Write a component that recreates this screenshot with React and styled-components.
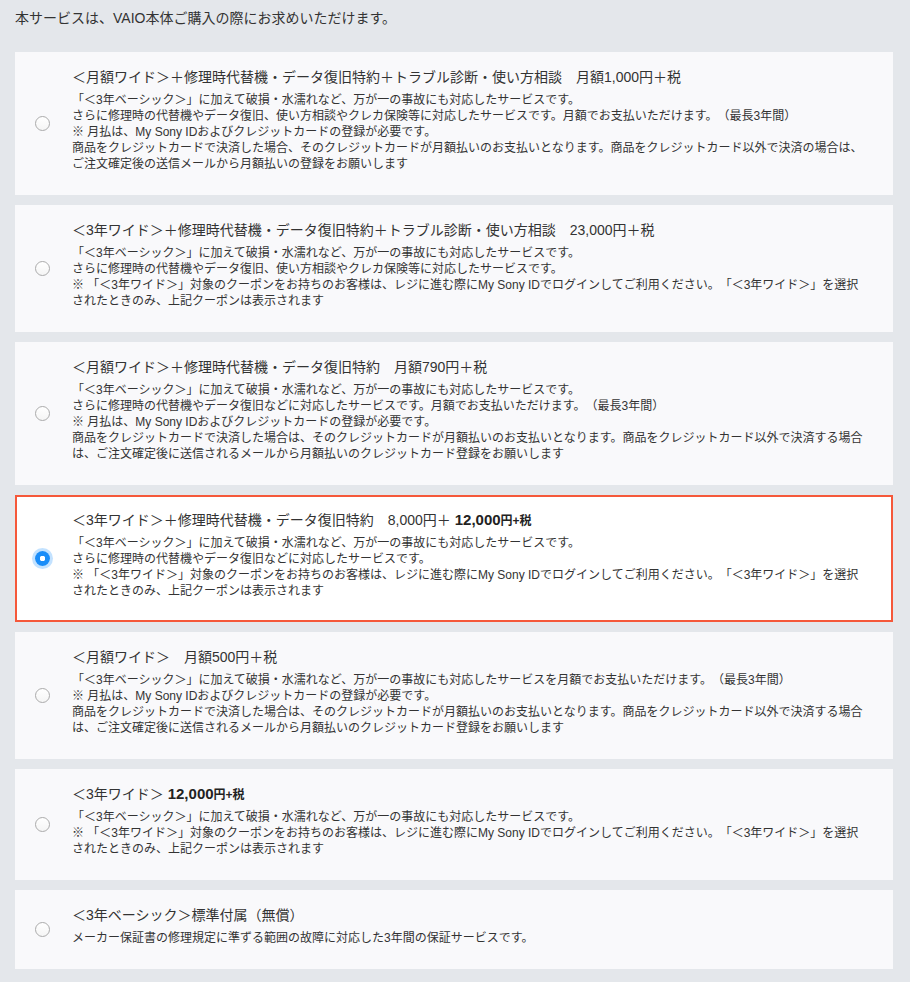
import React, { useState } from 'react';
import styled, { createGlobalStyle, css } from 'styled-components';

const GlobalStyle = createGlobalStyle`
body {
  margin: 0;
  background: #e4e7eb;
  font-family: "Liberation Sans", "Noto Sans CJK JP", sans-serif;
  color: #333;
  text-spacing-trim: space-all;
}
`;

const Page = styled.div`
padding: 8px 17px 14px 15px;
`;

const Lead = styled.p`
margin: 0 0 24px;
font-size: 14px;
line-height: 20px;
`;

const List = styled.div`
display: flex;
flex-direction: column;
gap: 10px;
`;

const Card = styled.label`
display: flex;
align-items: center;
background: #f9f9fb;
border: 2px solid transparent;
padding: 0 20px 0 18px;
cursor: pointer;
${({selected}) => selected && css`
  background: #fff;
  border-color: #f5583a;
`}
`;

const Radio = styled.span`
flex: none;
width: 15px;
height: 15px;
border-radius: 50%;
box-sizing: border-box;
border: 1px solid #ababab;
background: linear-gradient(#fff, #f5f5f5);
margin-right: 22px;
${({checked}) => checked && css`
  border: none;
  background: radial-gradient(circle, #fff 0 2.6px, #1a8df8 3px);
  box-shadow: 0 0 0 3px rgba(40, 150, 255, 0.28);
`}
`;

const Body = styled.div`
padding: 13px 0 21px;
`;

const Title = styled.div`
font-size: 14px;
line-height: 20px;
height: 20px;
margin-bottom: 5px;
white-space: nowrap;
`;

const Price = styled.b`
font-size: 15px;
line-height: 1;
color: #222;
`;

const Unit = styled.b`
font-size: 12px;
line-height: 1;
color: #222;
`;

const Line = styled.div`
font-size: 12px;
line-height: 16px;
height: 16px;
white-space: nowrap;
`;

const bold = (
  <><Price>12,000</Price><Unit>円+税</Unit></>
);

const plans = [
  {
    title: '＜月額ワイド＞＋修理時代替機・データ復旧特約＋トラブル診断・使い方相談　月額1,000円＋税',
    lines: [
      '「＜3年ベーシック＞」に加えて破損・水濡れなど、万が一の事故にも対応したサービスです。',
      'さらに修理時の代替機やデータ復旧、使い方相談やクレカ保険等に対応したサービスです。月額でお支払いただけます。（最長3年間）',
      '※ 月払は、My Sony IDおよびクレジットカードの登録が必要です。',
      '商品をクレジットカードで決済した場合、そのクレジットカードが月額払いのお支払いとなります。商品をクレジットカード以外で決済の場合は、',
      'ご注文確定後の送信メールから月額払いの登録をお願いします',
    ],
  },
  {
    title: '＜3年ワイド＞＋修理時代替機・データ復旧特約＋トラブル診断・使い方相談　23,000円＋税',
    lines: [
      '「＜3年ベーシック＞」に加えて破損・水濡れなど、万が一の事故にも対応したサービスです。',
      'さらに修理時の代替機やデータ復旧、使い方相談やクレカ保険等に対応したサービスです。',
      '※ 「＜3年ワイド＞」対象のクーポンをお持ちのお客様は、レジに進む際にMy Sony IDでログインしてご利用ください。「＜3年ワイド＞」を選択',
      'されたときのみ、上記クーポンは表示されます',
    ],
  },
  {
    title: '＜月額ワイド＞＋修理時代替機・データ復旧特約　月額790円＋税',
    lines: [
      '「＜3年ベーシック＞」に加えて破損・水濡れなど、万が一の事故にも対応したサービスです。',
      'さらに修理時の代替機やデータ復旧などに対応したサービスです。月額でお支払いただけます。（最長3年間）',
      '※ 月払は、My Sony IDおよびクレジットカードの登録が必要です。',
      '商品をクレジットカードで決済した場合は、そのクレジットカードが月額払いのお支払いとなります。商品をクレジットカード以外で決済する場合',
      'は、ご注文確定後に送信されるメールから月額払いのクレジットカード登録をお願いします',
    ],
  },
  {
    title: <>＜3年ワイド＞＋修理時代替機・データ復旧特約　8,000円＋ {bold}</>,
    lines: [
      '「＜3年ベーシック＞」に加えて破損・水濡れなど、万が一の事故にも対応したサービスです。',
      'さらに修理時の代替機やデータ復旧などに対応したサービスです。',
      '※ 「＜3年ワイド＞」対象のクーポンをお持ちのお客様は、レジに進む際にMy Sony IDでログインしてご利用ください。「＜3年ワイド＞」を選択',
      'されたときのみ、上記クーポンは表示されます',
    ],
  },
  {
    title: '＜月額ワイド＞　月額500円＋税',
    lines: [
      '「＜3年ベーシック＞」に加えて破損・水濡れなど、万が一の事故にも対応したサービスを月額でお支払いただけます。（最長3年間）',
      '※ 月払は、My Sony IDおよびクレジットカードの登録が必要です。',
      '商品をクレジットカードで決済した場合は、そのクレジットカードが月額払いのお支払いとなります。商品をクレジットカード以外で決済する場合',
      'は、ご注文確定後に送信されるメールから月額払いのクレジットカード登録をお願いします',
    ],
  },
  {
    title: <>＜3年ワイド＞ {bold}</>,
    lines: [
      '「＜3年ベーシック＞」に加えて破損・水濡れなど、万が一の事故にも対応したサービスです。',
      '※ 「＜3年ワイド＞」対象のクーポンをお持ちのお客様は、レジに進む際にMy Sony IDでログインしてご利用ください。「＜3年ワイド＞」を選択',
      'されたときのみ、上記クーポンは表示されます',
    ],
  },
  {
    title: '＜3年ベーシック＞標準付属（無償）',
    lines: [
      'メーカー保証書の修理規定に準ずる範囲の故障に対応した3年間の保証サービスです。',
    ],
  },
];

export default () => {
  const [selected, setSelected] = useState(3);
  return <Page>
    <GlobalStyle/>
    <Lead>本サービスは、VAIO本体ご購入の際にお求めいただけます。</Lead>
    <List>
      {plans.map((plan, i) =>
        <Card key={i} selected={i === selected} onClick={() => setSelected(i)}>
          <Radio checked={i === selected}/>
          <Body>
            <Title>{plan.title}</Title>
            {plan.lines.map((line, j) => <Line key={j}>{line}</Line>)}
          </Body>
        </Card>)}
    </List>
  </Page>;
};
